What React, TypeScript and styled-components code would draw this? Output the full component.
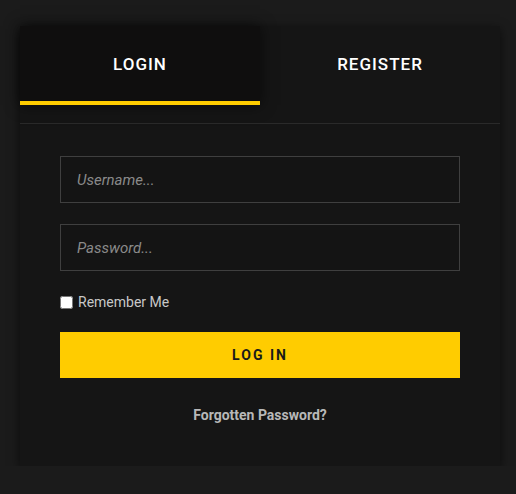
import React from "react";
import styled, { createGlobalStyle } from "styled-components";

const Global = createGlobalStyle`
  html, body { margin: 0; padding: 0; background: #1b1b1b; }
  body { font-family: Roboto, "Liberation Sans", sans-serif; }
  * { box-sizing: border-box; }
`;

const Page = styled.div`
  padding: 26px 16px 0 20px;
`;

const Card = styled.div`
  width: 480px;
  background: #151515;
  box-shadow: 0 3px 10px rgba(0, 0, 0, 0.6);
`;

const Tabs = styled.div`
  display: grid;
  grid-template-columns: 1fr 1fr;
  height: 98px;
  align-items: start;
  border-bottom: 1px solid #2a2a2a;
`;

const Tab = styled.div<{ $active?: boolean }>`
  height: 79px;
  display: flex;
  align-items: center;
  justify-content: center;
  font-size: 17px;
  font-weight: 500;
  letter-spacing: 1px;
  color: #ffffff;
  background: ${(p) => (p.$active ? "#0f0e0e" : "transparent")};
  border-bottom: 4px solid ${(p) => (p.$active ? "#ffcc00" : "transparent")};
  box-shadow: ${(p) => (p.$active ? "0 0 14px rgba(0,0,0,0.6)" : "none")};
  position: relative;
  z-index: ${(p) => (p.$active ? 1 : 0)};
`;

const Form = styled.form`
  display: flex;
  flex-direction: column;
  padding: 32px 40px 43px;
`;

const Input = styled.input`
  height: 47px;
  width: 100%;
  background: #141414;
  border: 1px solid #3f3f3f;
  padding: 0 16px;
  font-family: Roboto, "Liberation Sans", sans-serif;
  font-size: 15px;
  color: #ddd;
  outline: none;
  margin-bottom: 21px;
  &::placeholder {
    color: #8a8a8a;
    font-style: italic;
  }
`;

const RememberRow = styled.label`
  display: flex;
  align-items: center;
  gap: 5px;
  font-size: 14px;
  color: #c8c8c8;
  margin-top: 2px;
`;

const Check = styled.input`
  width: 13px;
  height: 13px;
  margin: 0;
`;

const Button = styled.button`
  margin-top: 22px;
  height: 46px;
  width: 100%;
  background: #ffcc00;
  border: none;
  font-family: Roboto, "Liberation Sans", sans-serif;
  font-weight: 700;
  font-size: 14px;
  letter-spacing: 2px;
  color: #1a1a1a;
`;

const Forgot = styled.a`
  margin-top: 29px;
  text-align: center;
  font-size: 14px;
  font-weight: 700;
  color: #b8b8b8;
  text-decoration: none;
`;

export default function App() {
  return (
    <>
      <Global />
      <Page>
        <Card>
          <Tabs>
            <Tab $active>LOGIN</Tab>
            <Tab>REGISTER</Tab>
          </Tabs>
          <Form onSubmit={(e) => e.preventDefault()}>
            <Input placeholder="Username..." />
            <Input type="password" placeholder="Password..." />
            <RememberRow>
              <Check type="checkbox" />
              Remember Me
            </RememberRow>
            <Button type="submit">LOG IN</Button>
            <Forgot href="#">Forgotten Password?</Forgot>
          </Form>
        </Card>
      </Page>
    </>
  );
}
